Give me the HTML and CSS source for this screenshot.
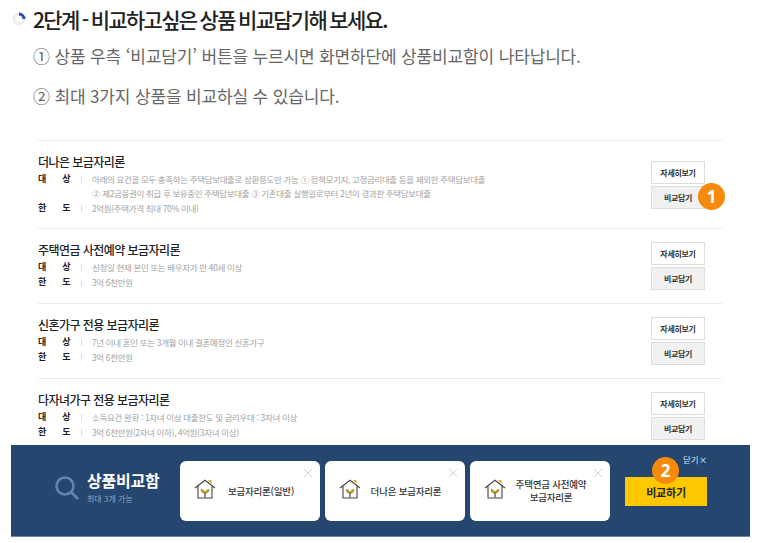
FILE: index.html
```html
<!DOCTYPE html>
<html lang="ko">
<head>
<meta charset="utf-8">
<title>상품비교함</title>
<link rel="stylesheet" href="styles.css">
</head>
<body>
<main class="page">
  <h1 class="step">
    <svg class="step-icon" width="14" height="14" viewBox="0 0 14 14"><circle cx="7" cy="7" r="5" fill="none" stroke="#ececec" stroke-width="3"/><path d="M7 2a5 5 0 0 1 5 5" fill="none" stroke="#2b4fa5" stroke-width="3"/></svg>
    <span>2단계 - 비교하고싶은 상품 비교담기해 보세요.</span>
  </h1>
  <p class="note">① 상품 우측 ‘비교담기’ 버튼을 누르시면 화면하단에 상품비교함이 나타납니다.</p>
  <p class="note second">② 최대 3가지 상품을 비교하실 수 있습니다.</p>

  <section class="list">
    <article class="item first">
      <div class="info">
        <h2>더나은 보금자리론</h2>
        <dl><dt>대&emsp;상</dt><dd>아래의 요건을 모두 충족하는 주택담보대출로 상환용도만 가능 ① 정책모기지, 고정금리대출 등을 제외한 주택담보대출<br>② 제2금융권이 취급 후 보유중인 주택담보대출 ③ 기존대출 실행일로부터 2년이 경과한 주택담보대출</dd></dl>
        <dl><dt>한&emsp;도</dt><dd>2억원(주택가격 최대 70% 이내)</dd></dl>
      </div>
      <div class="actions">
        <a class="btn">자세히보기</a>
        <a class="btn gray">비교담기<span class="badge one">1</span></a>
      </div>
    </article>
    <article class="item">
      <div class="info">
        <h2>주택연금 사전예약 보금자리론</h2>
        <dl><dt>대&emsp;상</dt><dd>신청일 현재 본인 또는 배우자가 만 40세 이상</dd></dl>
        <dl><dt>한&emsp;도</dt><dd>3억 6천만원</dd></dl>
      </div>
      <div class="actions"><a class="btn">자세히보기</a><a class="btn gray">비교담기</a></div>
    </article>
    <article class="item">
      <div class="info">
        <h2>신혼가구 전용 보금자리론</h2>
        <dl><dt>대&emsp;상</dt><dd>7년 이내 혼인 또는 3개월 이내 결혼예정인 신혼가구</dd></dl>
        <dl><dt>한&emsp;도</dt><dd>3억 6천만원</dd></dl>
      </div>
      <div class="actions"><a class="btn">자세히보기</a><a class="btn gray">비교담기</a></div>
    </article>
    <article class="item">
      <div class="info">
        <h2>다자녀가구 전용 보금자리론</h2>
        <dl><dt>대&emsp;상</dt><dd>소득요건 완화 : 1자녀 이상 대출한도 및 금리우대 : 3자녀 이상</dd></dl>
        <dl><dt>한&emsp;도</dt><dd>3억 6천만원(2자녀 이하), 4억원(3자녀 이상)</dd></dl>
      </div>
      <div class="actions"><a class="btn">자세히보기</a><a class="btn gray">비교담기</a></div>
    </article>
  </section>
</main>

<aside class="tray">
  <div class="tray-title">
    <svg class="search" width="26" height="26" viewBox="0 0 26 26"><circle cx="11" cy="11" r="8.500" fill="none" stroke="#5f86b0" stroke-width="2.600"/><path d="M17 17l7 7" stroke="#5f86b0" stroke-width="2.800"/></svg>
    <div>
      <strong>상품비교함</strong>
      <small>최대 3개 가능</small>
    </div>
  </div>
  <div class="cards">
    <div class="card">
      <svg class="house" width="22" height="20" viewBox="0 0 22 20"><path d="M1 9L11 1.200L21 9M4 7V19H18V7" fill="none" stroke="#444" stroke-width="1.100"/><path d="M14 1.500l3.200-.8.800 4z" fill="#d2a825"/><path d="M11 18.500V13.500" stroke="#444" stroke-width="1.200"/><path d="M11 14C10.500 12 9 10.500 7 10.500 7 13 8.800 14.500 11 14zM11 14C11.500 12 13 10.500 15 10.500 15 13 13.200 14.500 11 14z" fill="#d8a800" stroke="#6a5c18" stroke-width=".5"/></svg>
      <span class="card-text">보금자리론(일반)</span>
      <svg class="close" width="10" height="10" viewBox="0 0 10 10"><path d="M1 1l8 8M9 1l-8 8" stroke="#d4d4d4" stroke-width="1"/></svg>
    </div>
    <div class="card">
      <svg class="house" width="22" height="20" viewBox="0 0 22 20"><path d="M1 9L11 1.200L21 9M4 7V19H18V7" fill="none" stroke="#444" stroke-width="1.100"/><path d="M14 1.500l3.200-.8.800 4z" fill="#d2a825"/><path d="M11 18.500V13.500" stroke="#444" stroke-width="1.200"/><path d="M11 14C10.500 12 9 10.500 7 10.500 7 13 8.800 14.500 11 14zM11 14C11.500 12 13 10.500 15 10.500 15 13 13.200 14.500 11 14z" fill="#d8a800" stroke="#6a5c18" stroke-width=".5"/></svg>
      <span class="card-text">더나은 보금자리론</span>
      <svg class="close" width="10" height="10" viewBox="0 0 10 10"><path d="M1 1l8 8M9 1l-8 8" stroke="#d4d4d4" stroke-width="1"/></svg>
    </div>
    <div class="card">
      <svg class="house" width="22" height="20" viewBox="0 0 22 20"><path d="M1 9L11 1.200L21 9M4 7V19H18V7" fill="none" stroke="#444" stroke-width="1.100"/><path d="M14 1.500l3.200-.8.800 4z" fill="#d2a825"/><path d="M11 18.500V13.500" stroke="#444" stroke-width="1.200"/><path d="M11 14C10.500 12 9 10.500 7 10.500 7 13 8.800 14.500 11 14zM11 14C11.500 12 13 10.500 15 10.500 15 13 13.200 14.500 11 14z" fill="#d8a800" stroke="#6a5c18" stroke-width=".5"/></svg>
      <span class="card-text">주택연금 사전예약<br>보금자리론</span>
      <svg class="close" width="10" height="10" viewBox="0 0 10 10"><path d="M1 1l8 8M9 1l-8 8" stroke="#d4d4d4" stroke-width="1"/></svg>
    </div>
  </div>
  <div class="compare">
    <span class="shut">닫기×</span>
    <a class="go">비교하기<span class="badge two">2</span></a>
  </div>
</aside>
</body>
</html>
```
FILE: styles.css
```css
* { box-sizing: border-box; }
html, body { margin: 0; height: 543px; overflow: hidden; background: #fff; }
body { position: relative; font-family: "Noto Sans CJK KR", "Noto Sans", sans-serif; color: #333; }
.page { padding-top: 4px; }
.step { display: flex; align-items: center; gap: 7px; margin: 0 0 0 12px; font-size: 21px; line-height: 30px; font-weight: 500; letter-spacing: -1.700px; word-spacing: -1px; color: #222; }
.step-icon { flex: none; }
.note { margin: 10px 0 0 33px; font-size: 17px; line-height: 24px; letter-spacing: -.15px; color: #666; }
.note.second { margin-top: 16px; }
.list { margin: 32px 40px 0 38px; }
.item { display: flex; justify-content: space-between; height: 75px; border-top: 1px solid #ebebeb; padding-right: 17px; }
.item.first { height: 88px; }
.info { padding-top: 12px; }
h2 { margin: 0 0 1px; font-size: 12px; line-height: 18px; font-weight: 500; letter-spacing: -.55px; color: #222; }
dl { display: flex; margin: 0 0 1px; font-size: 8.500px; line-height: 14px; }
dt { width: 43px; font-size: 9px; font-weight: 700; letter-spacing: 3.500px; color: #222; white-space: nowrap; }
dd { margin: 0; padding-left: 11px; color: #a3a3a3; background: linear-gradient(#ddd, #ddd) 0 4px / 1px 7px no-repeat; letter-spacing: -.35px; white-space: nowrap; }
.actions { display: flex; flex-direction: column; gap: 2px; padding-top: 13px; }
.item.first .actions { padding-top: 20px; }
.btn { position: relative; display: flex; align-items: center; justify-content: center; width: 54px; height: 23px; background: #fff; border: 1px solid #ddd; font-size: 8px; font-weight: 700; letter-spacing: -.3px; color: #333; }
.btn.gray { background: #f1f1f1; }
.badge { position: absolute; display: flex; align-items: center; justify-content: center; width: 27px; height: 27px; border-radius: 50%; background: #f58a0b; color: #fff; font-size: 17px; font-weight: 700; letter-spacing: 0; font-family: "Noto Sans", sans-serif; }
.badge.one { left: 46px; top: -4px; }
.badge.two { left: 27px; top: -20px; }
.tray { position: absolute; left: 11px; top: 445px; width: 739px; height: 92px; display: flex; background: #24466f; border-bottom: 1px solid #6f87a3; }
.tray-title { display: flex; align-items: center; gap: 7px; width: 169px; padding: 0 0 6px 43px; color: #fff; }
.tray-title strong { display: block; font-size: 16px; line-height: 20px; font-weight: 700; letter-spacing: -.2px; white-space: nowrap; }
.tray-title small { display: block; margin-top: 3px; font-size: 8px; line-height: 12px; color: #8fa6c0; white-space: nowrap; }
.search { flex: none; }
.cards { display: flex; gap: 5px; padding-top: 16px; }
.card { position: relative; display: flex; align-items: center; width: 140px; height: 60px; background: #fff; border-radius: 6px; padding-left: 14px; }
.house { flex: none; margin-top: -4px; }
.card-text { flex: 1; font-size: 9.500px; line-height: 13px; font-weight: 500; color: #333; text-align: center; padding-right: 14px; letter-spacing: -.2px; }
.close { position: absolute; right: 7px; top: 7px; }
.compare { position: relative; padding: 32px 0 0 15px; }
.shut { position: absolute; left: 73px; top: 7px; font-size: 8.500px; line-height: 14px; color: #dfe6ef; white-space: nowrap; }
.go { position: relative; display: flex; align-items: center; justify-content: center; width: 82px; height: 29px; background: #fdc800; font-size: 11px; font-weight: 700; letter-spacing: -.2px; color: #222; }
```
